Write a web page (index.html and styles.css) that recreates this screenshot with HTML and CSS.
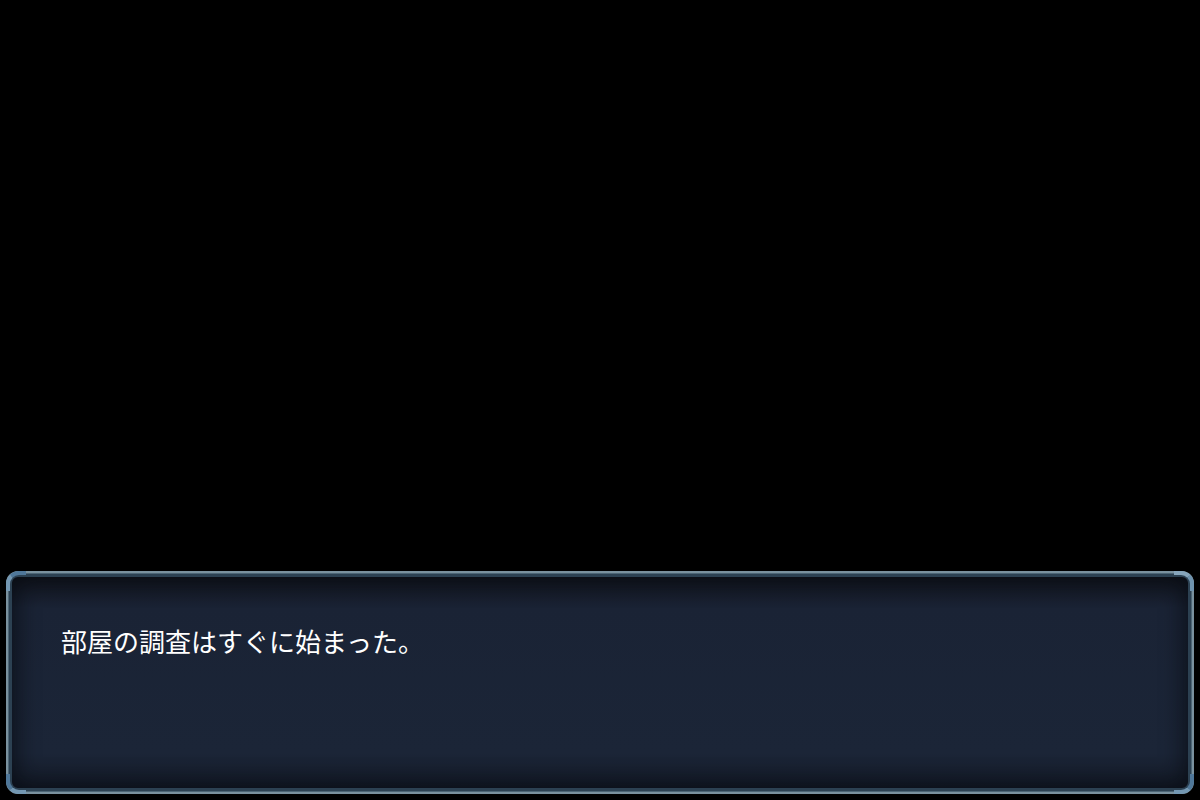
FILE: index.html
```html
<!DOCTYPE html>
<html lang="ja">
<head>
<meta charset="utf-8">
<link rel="stylesheet" href="styles.css">
</head>
<body>
<div class="stage">
  <div class="message-window">
    <span class="corner tl"></span>
    <span class="corner tr"></span>
    <span class="corner bl"></span>
    <span class="corner br"></span>
    <p class="message-text">部屋の調査はすぐに始まった。</p>
  </div>
</div>
</body>
</html>
```

FILE: styles.css
```css
html, body {
  margin: 0;
  padding: 0;
  background: #000;
}

.stage {
  width: 1200px;
  height: 800px;
  display: flex;
  flex-direction: column;
  justify-content: flex-end;
  padding: 0 6px 6px;
  box-sizing: border-box;
}

.message-window {
  position: relative;
  height: 223px;
  box-sizing: border-box;
  border: 2px solid #7a919e;
  border-radius: 12px;
  background: linear-gradient(to bottom, #11141c 0%, #1a2335 16%, #1b2537 82%, #141b28 100%);
  box-shadow:
    inset 0 0 0 1px #4d6676,
    inset 0 0 0 4px #2c4152,
    inset 0 0 22px 8px rgba(5, 8, 14, 0.7);
  padding: 49px 53px;
}

.corner {
  position: absolute;
  width: 20px;
  height: 20px;
  box-sizing: border-box;
  border: 0 solid #6f93b0;
}

.corner.tl {
  top: -2px;
  left: -2px;
  border-top-width: 4px;
  border-left-width: 4px;
  border-top-left-radius: 13px;
  border-top-color: #4f7799;
  border-left-color: #7397b2;
}

.corner.tr {
  top: -2px;
  right: -2px;
  border-top-width: 4px;
  border-right-width: 4px;
  border-top-right-radius: 13px;
  border-top-color: #86a5bb;
  border-right-color: #6f93ae;
}

.corner.bl {
  bottom: -2px;
  left: -2px;
  border-bottom-width: 4px;
  border-left-width: 4px;
  border-bottom-left-radius: 13px;
  border-bottom-color: #7397b2;
  border-left-color: #4f7799;
}

.corner.br {
  bottom: -2px;
  right: -2px;
  border-bottom-width: 4px;
  border-right-width: 4px;
  border-bottom-right-radius: 13px;
  border-bottom-color: #7397b2;
  border-right-color: #4f7799;
}

.message-text {
  margin: 0;
  color: #ffffff;
  font-family: "Noto Sans CJK JP", "Noto Sans", sans-serif;
  font-size: 26px;
  line-height: 38px;
  letter-spacing: 0;
}
```
